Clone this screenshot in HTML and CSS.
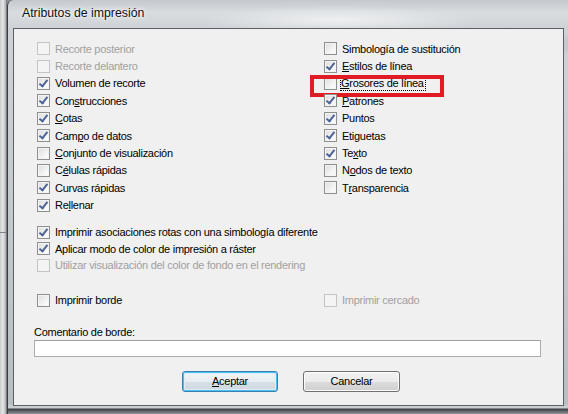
FILE: index.html
```html
<!DOCTYPE html>
<html lang="es">
<head>
	<meta charset="UTF-8">
	<title>Atributos de impresión</title>
	<link rel="stylesheet" href="styles.css">
</head>
<body>
	<div class="desk">
		<div class="behind"></div>
		<div class="window">
			<div class="titlebar">
				<span class="title">Atributos de impresión</span>
			</div>
			<div class="client">
				<div class="options">
					<div class="col">
						<div class="chk disabled"><span class="box"></span>Recorte posterior</div>
						<div class="chk disabled"><span class="box"></span>Recorte delantero</div>
						<div class="chk"><span class="box on"></span>Volumen de recorte</div>
						<div class="chk"><span class="box on"></span>Con<u>s</u>trucciones</div>
						<div class="chk"><span class="box on"></span><u>C</u>otas</div>
						<div class="chk"><span class="box on"></span>Cam<u>p</u>o de datos</div>
						<div class="chk"><span class="box"></span><u>C</u>onjunto de visualización</div>
						<div class="chk"><span class="box"></span>C<u>é</u>lulas rápidas</div>
						<div class="chk"><span class="box on"></span>Curvas rápidas</div>
						<div class="chk"><span class="box on"></span>Re<u>l</u>lenar</div>
					</div>
					<div class="col">
						<div class="chk"><span class="box"></span>Simbología de sustitución</div>
						<div class="chk"><span class="box on"></span><u>E</u>stilos de línea</div>
						<div class="chk marked">
							<span class="box"></span><span class="focus"><u>G</u>rosores de línea</span>
							<span class="highlight"></span>
						</div>
						<div class="chk"><span class="box on"></span><u>P</u>atrones</div>
						<div class="chk"><span class="box on"></span>Puntos</div>
						<div class="chk"><span class="box on"></span>Eti<u>g</u>uetas</div>
						<div class="chk"><span class="box on"></span>Te<u>x</u>to</div>
						<div class="chk"><span class="box"></span>N<u>o</u>dos de texto</div>
						<div class="chk"><span class="box"></span>T<u>r</u>ansparencia</div>
					</div>
				</div>

				<div class="group">
					<div class="chk"><span class="box on"></span>Imprimir asociaciones rotas con una simbología diferente</div>
					<div class="chk"><span class="box on"></span>Aplicar modo de color de impresión a ráster</div>
					<div class="chk disabled"><span class="box"></span>Utilizar visualización del color de fondo en el rendering</div>
				</div>

				<div class="options borders">
					<div class="col">
						<div class="chk"><span class="box"></span>Imprimir borde</div>
					</div>
					<div class="col">
						<div class="chk disabled"><span class="box"></span>Imprimir cercado</div>
					</div>
				</div>

				<div class="comment">
					<label for="comentario">Comentario de borde:</label>
					<input type="text" id="comentario" class="textbox">
				</div>

				<div class="buttons">
					<button class="btn default"><u>A</u>ceptar</button>
					<button class="btn">Cancelar</button>
				</div>
			</div>
		</div>
	</div>
</body>
</html>
```

FILE: styles.css
```css
body {
	margin: 0;
	width: 568px;
	height: 414px;
	overflow: hidden;
	font-family: "Liberation Sans", Arial, sans-serif;
	font-size: 11px;
	color: #000;
	background: #8a8f94;
}

.desk {
	display: flex;
	height: 414px;
}

/* window behind the dialog */
.behind {
	width: 7px;
	flex: none;
	background:
		linear-gradient(180deg, transparent 232px, #7d8186 232px, #7d8186 233px, transparent 233px),
		linear-gradient(90deg, #c9cbcd 0, #e6e7e8 3px, #a9adb1 6px, #4c4f52 7px);
}

.window {
	flex: none;
	width: 566px;
	height: 414px;
	box-sizing: border-box;
	padding: 0 0 8px 5px;
	border-left: 1px solid #3a3d40;
	border-top-left-radius: 6px;
	background:
		radial-gradient(ellipse 120px 16px at 470px 45px, rgba(120, 125, 130, 0.45), transparent),
		radial-gradient(ellipse 140px 14px at 330px 20px, rgba(255, 255, 255, 0.6), transparent),
		linear-gradient(180deg, #c4c9ce 0, #d8dcdf 12px, #cfd3d7 28px, #b9bec3 404px, #c9cdd1 406px, #c9cdd1 408px, #3a3d41 409px, #4b4f53 410px, #8f9397 414px);
	display: flex;
	flex-direction: column;
}

.titlebar {
	height: 28px;
	flex: none;
	display: flex;
	align-items: center;
	padding-left: 9px;
	padding-bottom: 2px;
	box-sizing: border-box;
}

.title {
	font-size: 12.3px;
	color: #111;
	text-shadow: 0 0 6px #fff, 0 0 3px #fff;
}

.client {
	flex: 1;
	width: 551px;
	box-sizing: border-box;
	background: #f0f0f0;
	border: 1px solid #5c5f63;
	padding: 11px 0 0 23px;
	letter-spacing: -0.28px;
}

.options {
	display: grid;
	grid-template-columns: 287px 1fr;
}

.chk {
	position: relative;
	display: flex;
	align-items: center;
	height: 17.4px;
	white-space: nowrap;
}

.chk.disabled {
	color: #a0a0a0;
}

.box {
	position: relative;
	width: 11px;
	height: 11px;
	flex: none;
	margin-right: 5px;
	border: 1px solid #8e8f8f;
	background: linear-gradient(135deg, #dcdcdc, #f7f7f7 70%, #fff);
	box-shadow: inset 0 0 0 1px #f4f4f4;
}

.disabled .box {
	border-color: #c4c4c4;
	background: #f4f4f4;
	box-shadow: none;
}

.box.on::after {
	content: "";
	position: absolute;
	left: 3px;
	top: 0;
	width: 3px;
	height: 7px;
	border: solid #4c6396;
	border-width: 0 2px 2px 0;
	transform: rotate(38deg);
}

.focus {
	outline: 1px dotted #000;
	outline-offset: 0;
	padding: 0 1px 0 0;
	margin-left: -1px;
	line-height: 13px;
}

/* red annotation over the row */
.highlight {
	position: absolute;
	left: -14px;
	top: 0;
	width: 126px;
	height: 14px;
	border: 4px solid #e01b24;
}

.group {
	margin-top: 10px;
}

.group .chk {
	height: 16.5px;
}

.borders {
	margin-top: 18px;
}

.comment {
	margin-top: 17px;
	margin-left: -3px;
	display: flex;
	flex-direction: column;
}

.comment label {
	height: 13px;
	line-height: 13px;
}

.textbox {
	margin-top: 1px;
	width: 507px;
	height: 17px;
	box-sizing: border-box;
	border: 1px solid #abadb3;
	border-top-color: #a0a0a0;
	background: #fff;
	padding: 0;
}

.buttons {
	display: flex;
	gap: 25px;
	margin-top: 14px;
	margin-left: 145px;
}

.btn {
	width: 97px;
	height: 21px;
	box-sizing: border-box;
	font-family: "Liberation Sans", Arial, sans-serif;
	font-size: 11px;
	letter-spacing: -0.28px;
	color: #000;
	border: 1px solid #707070;
	border-radius: 3px;
	background: linear-gradient(180deg, #f2f2f2 0, #ebebeb 50%, #dddddd 50%, #cfcfcf 100%);
	box-shadow: inset 0 0 0 1px #fcfcfc;
	padding: 0;
}

.btn.default {
	width: 96px;
	border-color: #3c7fb1;
	box-shadow: inset 0 0 0 1px #48c0f0, inset 0 0 0 2px #dcecf8;
	background: linear-gradient(180deg, #f0f4f7 0, #e8edf1 50%, #d8e0e6 50%, #cfd8df 100%);
}
```
